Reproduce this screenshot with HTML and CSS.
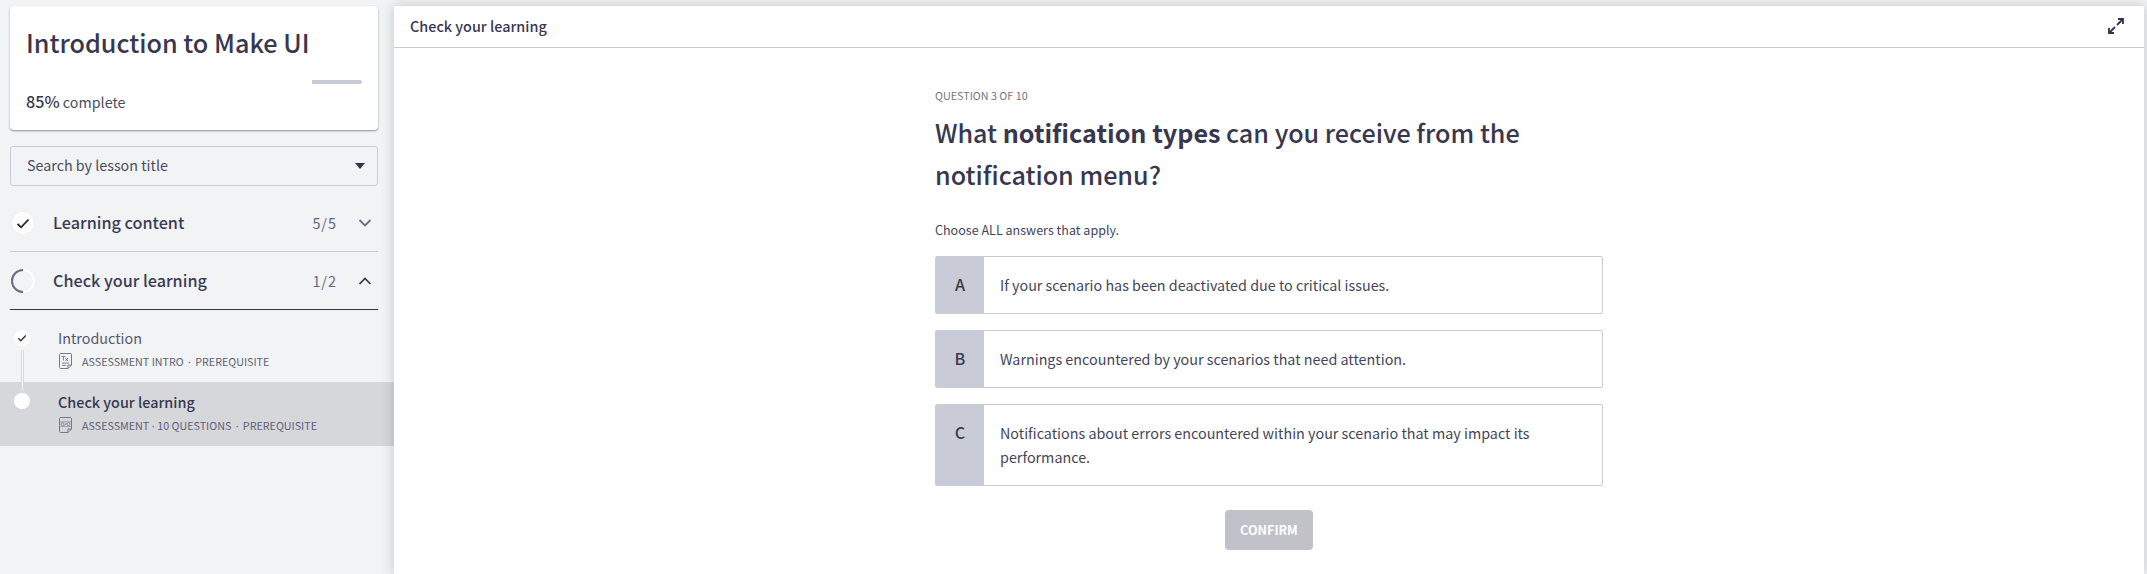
FILE: index.html
```html
<!DOCTYPE html>
<html lang="en">
<head>
<meta charset="utf-8">
<title>Introduction to Make UI</title>
<link rel="stylesheet" href="styles.css">
</head>
<body>
<div class="app">
  <aside class="sidebar">
    <section class="course">
      <h1 class="course-title">Introduction to Make UI</h1>
      <div class="progress"><div class="progress-rest"></div></div>
      <p class="course-status"><b>85%</b> complete</p>
    </section>
    <div class="search"><span>Search by lesson title</span>
      <svg width="10" height="6" viewBox="0 0 10 6"><path d="M0 0h10L5 6z" fill="#34344e"/></svg>
    </div>
    <div class="section">
      <svg class="section-icon" width="24" height="24" viewBox="0 0 24 24"><circle cx="12" cy="12" r="11.7" fill="#fff" stroke="#e3e4e6" stroke-width=".6"/><path d="M6.500 12.800l3.600 3.500 7.400-7.800" fill="none" stroke="#222" stroke-width="1.800"/></svg>
      <h2 class="section-title">Learning content</h2>
      <span class="count">5/5</span>
      <svg class="chev" width="14" height="8" viewBox="0 0 14 8"><path d="M1.500 1L7 6.500 12.500 1" fill="none" stroke="#6f7086" stroke-width="1.900"/></svg>
    </div>
    <div class="section open">
      <svg class="section-icon" width="24" height="24" viewBox="0 0 24 24"><circle cx="12" cy="12" r="11.700" fill="none" stroke="#dcdde0" stroke-width=".6"/><path d="M12 1a11 11 0 0 1 0 22" fill="none" stroke="#fff" stroke-width="2"/><path d="M12 1a11 11 0 0 0 0 22" fill="none" stroke="#6c6c82" stroke-width="2"/></svg>
      <h2 class="section-title">Check your learning</h2>
      <span class="count">1/2</span>
      <svg class="chev" width="14" height="8" viewBox="0 0 14 8"><path d="M1.500 7L7 1.500 12.500 7" fill="none" stroke="#34344e" stroke-width="1.700"/></svg>
    </div>
    <ul class="lessons">
      <li class="lesson">
        <div class="rail">
          <svg width="16" height="16" viewBox="0 0 16 16"><circle cx="8" cy="8" r="8" fill="#fff"/><path d="M4.300 8.300l2.500 2.400L11.800 5.600" fill="none" stroke="#333" stroke-width="1.400"/></svg>
          <span class="rail-line"></span>
        </div>
        <div class="lesson-body">
          <h3 class="lesson-title">Introduction</h3>
          <p class="lesson-meta"><svg width="13" height="16" viewBox="0 0 13 16" fill="none" stroke="#77788c"><path d="M9 15.500H1.500a1 1 0 0 1-1-1v-13a1 1 0 0 1 1-1h10a1 1 0 0 1 1 1V12zM9 15.500V12h3.500"/><path d="M2.500 3.500h4M4.500 3.500v4M6.500 5l2.500 3M9 5l-2.500 3M3 10h7M3 12.300h4.500" stroke-width=".9"/></svg><span class="meta-text">ASSESSMENT INTRO<span class="dot wide">·</span>PREREQUISITE</span></p>
        </div>
      </li>
      <li class="lesson active">
        <div class="rail"><svg width="16" height="16" viewBox="0 0 16 16"><circle cx="8" cy="8" r="8" fill="#fff"/></svg></div>
        <div class="lesson-body">
          <h3 class="lesson-title current">Check your learning</h3>
          <p class="lesson-meta"><svg width="13" height="16" viewBox="0 0 13 16" fill="none" stroke="#77788c"><path d="M9 15.500H1.500a1 1 0 0 1-1-1v-13a1 1 0 0 1 1-1h10a1 1 0 0 1 1 1V12zM9 15.500V12h3.500"/><path d="M1 4.800h11M1 9.600h11" stroke-width=".6"/><circle cx="3.500" cy="7.200" r="1.500" stroke-width=".8"/><circle cx="9.500" cy="7.200" r="1.500" stroke-width=".8"/><path d="M5.500 8.500l2-2.500" stroke-width=".8"/></svg><span class="meta-text">ASSESSMENT<span class="dot">·</span>10 QUESTIONS<span class="dot wide">·</span>PREREQUISITE</span></p>
        </div>
      </li>
    </ul>
  </aside>
  <main class="panel">
    <header class="panel-head"><span class="panel-title">Check your learning</span>
      <svg width="18" height="18" viewBox="0 0 18 18" fill="none" stroke="#34344e" stroke-width="1.800"><path d="M11 2h5v5M16 2l-6 6M7 16H2v-5M2 16l6-6"/></svg>
    </header>
    <div class="question">
      <p class="q-label">QUESTION 3 OF 10</p>
      <h2 class="q-title">What <b>notification types</b> can you receive from the<br>notification menu?</h2>
      <p class="q-hint">Choose ALL answers that apply.</p>
      <div class="options">
        <div class="option"><span class="key">A</span><p class="answer">If your scenario has been deactivated due to critical issues.</p></div>
        <div class="option"><span class="key">B</span><p class="answer">Warnings encountered by your scenarios that need attention.</p></div>
        <div class="option"><span class="key">C</span><p class="answer">Notifications about errors encountered within your scenario that may impact its<br>performance.</p></div>
      </div>
      <button class="confirm">CONFIRM</button>
    </div>
  </main>
</div>
</body>
</html>
```
FILE: styles.css
```css
* { box-sizing: border-box; margin: 0; padding: 0; }
body { font-family: "Noto Sans CJK SC", "Noto Sans", sans-serif; color: #44455a; background: #f1f3f5; overflow: hidden; }
h1, h2, h3 { font-weight: 500; }
svg { display: block; flex: none; }
.app { display: flex; height: 574px; padding-top: 6px; padding-right: 3px; }
.sidebar { width: 394px; flex: none; }
.course { margin: 0 16px 0 10px; height: 124px; padding: 16px 16px 0 16px; background: #fff; border-radius: 4px; box-shadow: 0 1px 2px rgba(40, 44, 52, .5); }
.course-title { font-size: 25.2px; line-height: 40px; white-space: nowrap; color: #37374f; }
.progress { display: flex; justify-content: flex-end; margin-top: 18px; }
.progress-rest { width: 50px; height: 4px; background: #c9ccd6; border-radius: 0 2px 2px 0; }
.course-status { margin-top: 5px; font-size: 14.3px; line-height: 24px; color: #4b4b5f; }
.course-status b { font-size: 16.2px; font-weight: 500; color: #37374f; }
.search { margin: 16px 16px 0 10px; height: 40px; padding: 0 12px 0 16px; border: 1px solid #c9ccd6; border-radius: 3px; display: flex; align-items: center; justify-content: space-between; font-size: 14.3px; line-height: 24px; color: #4b4b5f; }
.search span { padding-bottom: 2px; }
.section { margin: 8px 16px 0 10px; height: 58px; border-bottom: 1px solid #c8cad0; display: flex; align-items: center; padding: 0 6px 0 1px; }
.section.open { margin-top: 0; border-color: #34344e; }
.section-title { margin-left: 18px; margin-top: -1px; font-size: 16.2px; line-height: 24px; color: #3b3b54; }
.count { margin-left: auto; font-size: 14.4px; letter-spacing: 1px; color: #66677d; }
.chev { margin-left: 21px; }
.lessons { list-style: none; padding-top: 8px; }
.lesson { display: flex; height: 64px; padding: 12px 0 0 14px; }
.rail { width: 44px; display: flex; flex-direction: column; align-items: flex-start; }
.rail-line { position: relative; z-index: 1; flex: none; margin: 4px 0 0 7px; width: 3px; height: 40px; border: solid #d3d5d9; border-width: 0 1px; background: #fff; }
.lesson.active { background: #d5d7db; padding-top: 11px; }
.lesson-title { font-size: 14.35px; font-weight: 400; line-height: 20px; color: #56576e; margin-top: -2px; }
.lesson-title.current { margin-top: -1px; font-weight: 500; font-size: 14.4px; color: #37374f; }
.lesson-meta { display: flex; align-items: center; gap: 10px; padding-left: 1px; margin-top: 3px; height: 20px; font-size: 10.72px; line-height: 20px; color: #5e5f75; white-space: nowrap; }
.meta-text { padding-top: 2px; }
.dot { display: inline-block; width: 8px; text-align: center; font-family: "Noto Sans", sans-serif; line-height: 1; }
.dot.wide { width: 11.5px; }
.panel { flex: 1; background: #fff; box-shadow: 0 0 12px rgba(30, 30, 34, .22); }
.panel-head { height: 42px; border-bottom: 1px solid #c9ccd6; display: flex; align-items: center; justify-content: space-between; padding: 0 19px 1px 16px; font-size: 14.4px; }
.panel-title { padding-bottom: 2px; font-weight: 500; color: #37374f; }
.question { width: 668px; margin-left: 541px; padding-top: 38px; }
.q-label { font-size: 10.75px; line-height: 20px; color: #74757f; }
.q-title { margin-top: 5px; font-size: 25.15px; line-height: 42px; white-space: nowrap; color: #37374f; }
.q-hint { margin-top: 25px; font-size: 12.55px; line-height: 20px; }
.options { margin-top: 16px; display: grid; gap: 16px; }
.option { min-height: 58px; border: 1px solid #c9ccd6; border-radius: 2px; display: flex; }
.key { width: 48px; background: #c9ccd6; padding-top: 15px; text-align: center; font-size: 16.2px; font-weight: 500; line-height: 24px; color: #3b3b4c; }
.answer { padding: 16px 0 16px 16px; font-size: 14.34px; line-height: 24px; white-space: nowrap; }
.confirm { display: block; margin: 24px auto 0; width: 88px; height: 40px; border: 0; border-radius: 4px; background: #c1c2c9; color: #fff; font: 700 12.6px/40px "Noto Sans CJK SC", sans-serif; }
```
